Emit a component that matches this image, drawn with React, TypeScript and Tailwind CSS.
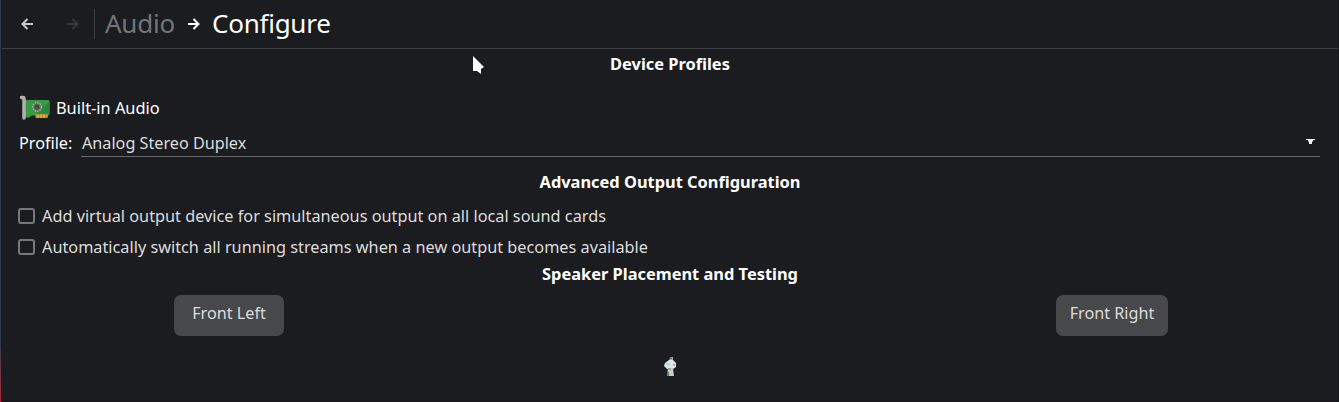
import React from "react";

function Arrow({ back = false, className = "" }: { back?: boolean; className?: string }) {
  return (
    <svg viewBox="0 0 12 12" className={`h-3 w-3 shrink-0 ${className}`} fill="none" stroke="currentColor" strokeWidth="2">
      {back ? <path d="M12 6H1.5M6.5 1L1.5 6l5 5" /> : <path d="M0 6h10.500M5.500 1l5 5-5 5" />}
    </svg>
  );
}

function SoundCardIcon() {
  return (
    <svg viewBox="0 0 30 26" className="h-[26px] w-[30px] shrink-0">
      <path d="M5 5h23q1.500 0 1.500 1.500v12q0 2-2 2H12l-3 2H5z" fill="#3a9a44" />
      <path d="M15 20.500L29.500 6v12.500q0 2-2 2z" fill="#2c893b" />
      <path d="M1.500 2.500H3Q4 2.500 4 4v19" fill="none" stroke="#b0b2b2" strokeWidth="3.500" strokeLinecap="round" />
      <circle cx="17" cy="12" r="4.300" fill="#5b7a5f" stroke="#a5bda5" strokeWidth="1.200" strokeDasharray="1.500 1" />
      <rect x="14.500" y="9.500" width="5" height="5" rx="1.500" fill="#484b4a" />
      <path d="M15.500 19H28v2.500q0 1.500-1.500 1.500h-11z" fill="#bd8f35" />
      <path d="M18 19.500V23M21 19.500V23M24 19.500V23" stroke="#e3c15b" strokeWidth="1" />
    </svg>
  );
}

function ListenerIcon() {
  return (
    <svg viewBox="0 0 16 22" className="h-[22px] w-4 shrink-0">
      <path d="M8 1h3v4H7z" fill="#a5aaac" />
      <path d="M8.500 1.500h1v1.500h-1z" fill="#34383d" />
      <path d="M3 7l4-3h4l3 3v4l-3 2H5l-3-3z" fill="#dfe5e7" />
      <path d="M4.500 7.500h3V9h-3z" fill="#a4bfcb" />
      <path d="M11 8h2v1.500h-2z" fill="#899aa2" />
      <path d="M6 12h5l1 8H5z" fill="#c5cac9" />
      <path d="M6 12h3v2H6z" fill="#8cb77b" />
      <path d="M5 16h2v4H5z" fill="#70787a" />
    </svg>
  );
}

function Heading({ children }: { children: React.ReactNode }) {
  return <h2 className="ml-px flex h-6 items-center justify-center text-[16.4px] font-bold leading-[22px] text-white">{children}</h2>;
}

function Option({ label }: { label: string }) {
  return (
    <label className="flex h-[31px] items-center gap-[7px] text-[16.28px] leading-[22px] text-[#dcdcdc]">
      <span className="h-4 w-[17px] shrink-0 rounded-[3px] border-2 border-[#777879]" />
      <span className="whitespace-nowrap">{label}</span>
    </label>
  );
}

export default function App() {
  return (
    <div className="flex h-[402px] w-[1339px] overflow-hidden bg-[#1b1c20] font-['Noto_Sans',sans-serif]">
      <div className="w-px shrink-0 bg-linear-to-b from-[#29364c] from-85% to-[#b02030]" />
      <div className="relative flex min-w-0 flex-1 flex-col border-b border-[#1c151c]">
        <header className="ml-px flex h-[49px] shrink-0 items-center border-b border-[#3d3f42] pb-px pl-[19px]">
          <Arrow back className="text-[#c9cacb]" />
          <Arrow className="ml-[34px] text-[#36383b]" />
          <span className="ml-[15px] h-[30px] w-px bg-[#3b3d40]" />
          <span className="ml-[10px] h-[34px] w-[71px] text-[26px] leading-8 tracking-[-0.25px] text-[#737476]">Audio</span>
          <Arrow className="ml-3 text-white" />
          <span className="ml-3 h-[34px] text-[26px] leading-8 tracking-[-0.25px] text-white">Configure</span>
        </header>
        <main className="flex flex-col pl-[18px] pr-[18px] pt-[3px]">
          <Heading>Device Profiles</Heading>
          <div className="mt-[19px] flex h-[26px] items-center gap-[6px] pl-px text-[16.35px] leading-6 text-white">
            <SoundCardIcon />
            <span>Built-in Audio</span>
          </div>
          <div className="mt-[9px] flex h-[27px] text-[16.2px] leading-[26px] text-white">
            <span className="w-[62px] shrink-0">Profile:</span>
            <div className="flex flex-1 justify-between border-b border-[#68696b] pl-px text-[#dcdcdc]">
              <span>Analog Stereo Duplex</span>
              <svg viewBox="0 0 9 6" className="mr-[5px] mt-[9px] h-[6px] w-[9px]">
                <path d="M0 0h9v1H7v1L6 3v2H3V3L2 2V1H0z" fill="#ededed" />
              </svg>
            </div>
          </div>
          <div className="mt-[13px]">
            <Heading>Advanced Output Configuration</Heading>
          </div>
          <div className="-ml-px mt-[6px] flex flex-col">
            <Option label="Add virtual output device for simultaneous output on all local sound cards" />
            <Option label="Automatically switch all running streams when a new output becomes available" />
          </div>
          <Heading>Speaker Placement and Testing</Heading>
          <div className="mt-[9px] flex justify-between pl-[155px] pr-[152px] text-[16.2px] text-[#dcdcdc]">
            <button className="h-[41px] w-[110px] rounded-[7px] bg-[#474849] pb-[5px]">Front Left</button>
            <button className="h-[41px] w-[112px] rounded-[7px] bg-[#474849] pb-[5px]">Front Right</button>
          </div>
          <div className="mt-5 flex justify-center">
            <ListenerIcon />
          </div>
        </main>
        <svg viewBox="0 0 12 20" className="absolute left-[472px] top-14 h-5 w-3">
          <path d="M0 0l11 11-3 2v5l-4-3H0z" fill="#fff" />
        </svg>
      </div>
      <div className="w-px shrink-0 bg-[#111622]" />
    </div>
  );
}
